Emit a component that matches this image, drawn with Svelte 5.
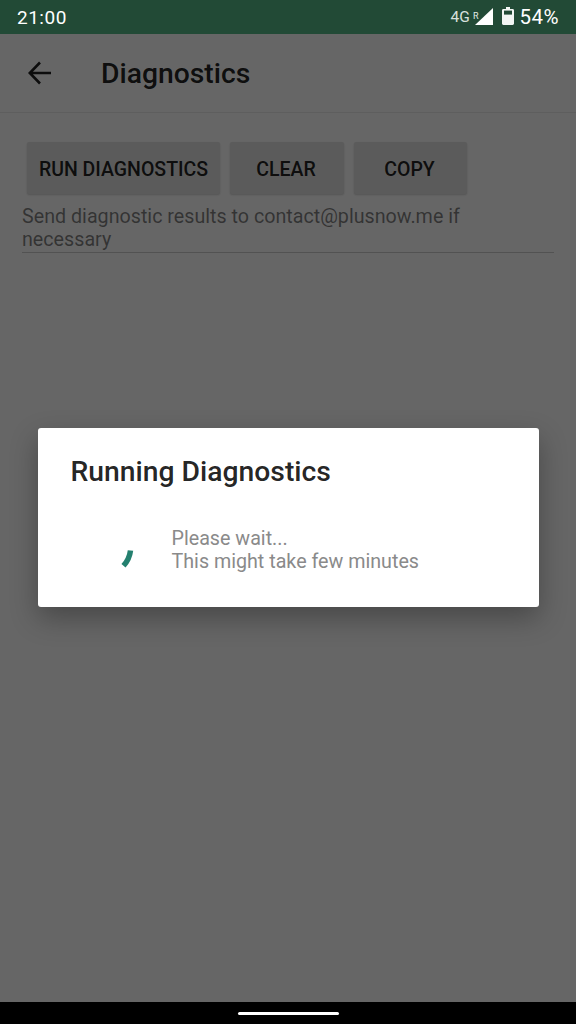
<script>
  const buttons = [
    { label: 'RUN DIAGNOSTICS', kind: 'wide' },
    { label: 'CLEAR', kind: '' },
    { label: 'COPY', kind: 'narrow' }
  ];
</script>

<div class="screen">
  <header class="status">
    <span class="time">21:00</span>
    <div class="status-right">
      <span class="net">4G</span>
      <span class="roam">R</span>
      <svg class="signal" width="18" height="17" viewBox="0 0 18 17"><path d="M18 0V17H0Z" fill="#fff"/></svg>
      <svg class="battery" width="12" height="18" viewBox="0 0 12 18">
        <path fill="#fff" fill-opacity=".95" d="M4 0h4v2h2.600c.8 0 1.400.6 1.400 1.400v13.200c0 .8-.6 1.400-1.400 1.400H1.400C.6 18 0 17.400 0 16.600V3.400C0 2.600.6 2 1.400 2H4z"/>
        <rect x="2" y="3.600" width="8" height="4" fill="#224a36"/>
      </svg>
      <span class="pct">54%</span>
    </div>
  </header>

  <main class="main">
    <div class="appbar">
      <svg class="back" width="24" height="24" viewBox="0 0 24 24"><path d="M23 12H2M12 1.500 1.800 12 12 22.500" fill="none" stroke="#000" stroke-opacity=".87" stroke-width="2.600"/></svg>
      <h1>Diagnostics</h1>
    </div>
    <div class="content">
      <div class="buttons">
        {#each buttons as b}
          <button class={b.kind}>{b.label}</button>
        {/each}
      </div>
      <p class="hint">Send diagnostic results to contact@plusnow.me if<br />necessary</p>
    </div>

    <div class="scrim">
      <div class="dialog">
        <h2>Running Diagnostics</h2>
        <div class="body">
          <svg class="spinner" width="48" height="48" viewBox="0 0 48 48"><path d="M26.500 24.500Q25.500 33 19.500 39.800" fill="none" stroke="#24806f" stroke-width="5.500"/></svg>
          <p>Please wait...<br />This might take few minutes</p>
        </div>
      </div>
    </div>
  </main>

  <footer class="nav"><span class="pill"></span></footer>
</div>

<style>
  :global(body) { margin: 0; background: #000; }
  .screen {
    width: 576px; height: 1024px; display: flex; flex-direction: column;
    font-family: Roboto, "Liberation Sans", sans-serif; overflow: hidden;
  }
  .status {
    height: 34px; flex: none; background: #224a36; color: #fff;
    display: flex; align-items: center; justify-content: space-between;
    padding: 0 17px; box-sizing: border-box;
  }
  .time { font-size: 19px; letter-spacing: .5px; }
  .status-right { display: flex; align-items: center; }
  .net { font-size: 15.500px; color: #d8e0dc; margin-right: 3px; }
  .roam { font-size: 9px; color: #e4eae7; align-self: flex-start; margin-top: 6px; margin-right: -3px; }
  .signal { margin-right: 9px; margin-top: -1px; }
  .battery { margin-right: 5px; margin-top: -2px; }
  .pct { font-size: 20.500px; letter-spacing: .5px; }

  .main { flex: 1; position: relative; background: #fff; display: flex; flex-direction: column; }
  .appbar {
    height: 79px; box-sizing: border-box; flex: none;
    display: flex; align-items: center; padding: 0 28px;
    border-bottom: 1px solid #ececec;
  }
  .back { flex: none; margin-top: -1px; }
  h1 { margin: 1px 0 0 49px; font-size: 28.300px; font-weight: 500; color: rgba(0,0,0,.87); }
  .content { padding: 29px 22px 0; }
  .buttons { display: flex; gap: 10px; padding-left: 5px; }
  button {
    width: 114px; height: 52px; border: 0; border-radius: 2px; padding: 2px 2px 0 0;
    background: #e3e3e3; color: rgba(0,0,0,.87);
    font: 500 19.500px Roboto, sans-serif;
    box-shadow: 0 1px 2px rgba(0,0,0,.18);
  }
  button.wide { width: 193px; padding-right: 0; }
  button.narrow { width: 113px; }
  .hint {
    margin: 11px 0 0; font-size: 19.700px; line-height: 23px; color: rgba(0,0,0,.5);
    border-bottom: 1px solid #cccccc; padding-bottom: 1px;
  }

  .scrim {
    position: absolute; inset: 0; background: rgba(0,0,0,.6);
    display: flex; align-items: center; justify-content: center;
  }
  .dialog {
    width: 501px; height: 179px; box-sizing: border-box; background: #fff; border-radius: 3px;
    padding: 27px 33px 0; margin-bottom: 2px;
    box-shadow: 0 11px 28px rgba(0,0,0,.3);
  }
  h2 { margin: 0; font-size: 28.300px; line-height: 34px; font-weight: 500; color: rgba(0,0,0,.87); }
  .body { display: flex; align-items: center; margin-top: 38px; height: 47px; }
  .spinner { flex: none; margin-left: 33px; margin-right: 20px; }
  .body p { margin: 0; font-size: 19.700px; line-height: 23px; color: #8a8a8a; }

  .nav { height: 22px; flex: none; background: #000; display: flex; justify-content: center; padding-top: 10px; box-sizing: border-box; }
  .pill { width: 101px; height: 3px; background: #fff; border-radius: 2px; }
</style>
